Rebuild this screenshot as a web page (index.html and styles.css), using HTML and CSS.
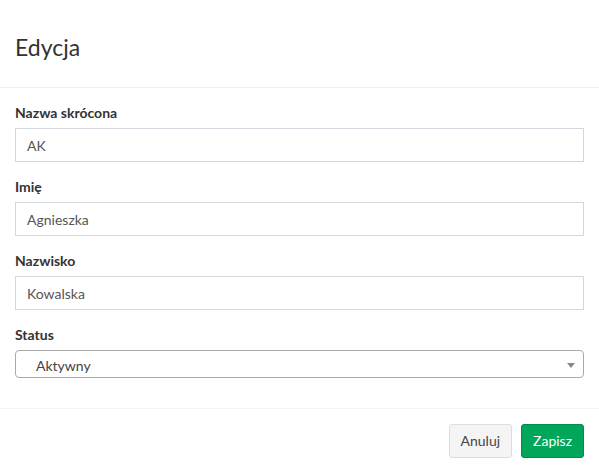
FILE: index.html
```html
<!DOCTYPE html>
<html lang="pl">
<head>
<meta charset="utf-8">
<title>Edycja</title>
<link rel="stylesheet" href="styles.css">
</head>
<body>
<div class="modal">
  <div class="modal-header">
    <h4 class="modal-title">Edycja</h4>
  </div>
  <div class="modal-body">
    <div class="form-group">
      <label class="label">Nazwa skrócona</label>
      <div class="input">AK</div>
    </div>
    <div class="form-group">
      <label class="label">Imię</label>
      <div class="input">Agnieszka</div>
    </div>
    <div class="form-group">
      <label class="label">Nazwisko</label>
      <div class="input">Kowalska</div>
    </div>
    <div class="form-group">
      <label class="label">Status</label>
      <div class="select">
        <span class="select-text">Aktywny</span>
        <span class="select-arrow"></span>
      </div>
    </div>
  </div>
  <div class="modal-footer">
    <button class="btn btn-default">Anuluj</button>
    <button class="btn btn-success">Zapisz</button>
  </div>
</div>
</body>
</html>
```
FILE: styles.css
```css
* { box-sizing: border-box; }
html, body { margin: 0; padding: 0; background: #fff; }
body {
  font-family: "Lato", "Noto Sans", sans-serif;
  font-size: 14px;
  line-height: 20px;
  color: #333;
}
.modal { width: 599px; }
.modal-header {
  padding: 28px 15px 21px;
  border-bottom: 1px solid #eeeeee;
}
.modal-title {
  margin: 0;
  font-size: 23px;
  line-height: 38px;
  font-weight: 400;
  color: #333;
}
.modal-body { padding: 15px; display: flow-root; }
.form-group { margin-bottom: 15px; }
.label {
  display: block;
  font-weight: 700;
  margin-bottom: 5px;
  color: #333;
}
.input {
  height: 34px;
  border: 1px solid #d2d6de;
  padding: 7px 11px 5px;
  color: #555;
  line-height: 20px;
}
.select {
  height: 28px;
  border: 1px solid #aaa;
  border-radius: 4px;
  display: flex;
  align-items: center;
  justify-content: space-between;
  padding: 0 8px 0 20px;
  color: #444;
}
.select-text { line-height: 28px; padding-top: 4px; }
.select-arrow {
  width: 0; height: 0;
  border-left: 4px solid transparent;
  border-right: 4px solid transparent;
  border-top: 5px solid #888;
  margin-top: 2px;
}
.modal-footer {
  border-top: 1px solid #f4f4f4;
  padding: 15px;
  display: flex;
  justify-content: flex-end;
  gap: 9px;
}
.btn {
  font-family: inherit;
  font-size: 14px;
  line-height: 20px;
  height: 34px;
  padding: 6px 11px;
  border-radius: 3px;
  border: 1px solid transparent;
  cursor: pointer;
}
.btn-default { background: #f4f4f4; border-color: #ddd; color: #444; }
.btn-success { background: #00a65a; border-color: #008d4c; color: #fff; }
```
